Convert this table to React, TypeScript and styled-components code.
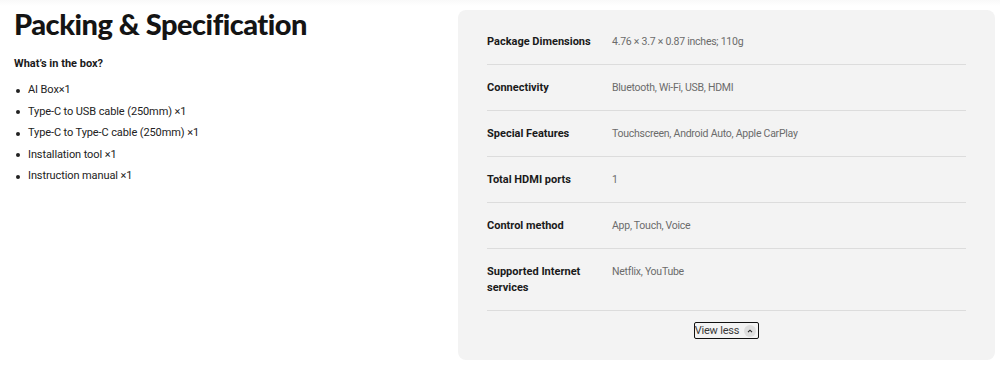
import * as React from 'react';
import styled, { createGlobalStyle } from 'styled-components';

const GlobalStyle = createGlobalStyle`
    html, body {
        margin: 0;
        padding: 0;
        background: linear-gradient(#f9f9f9, #ffffff 6px) no-repeat #ffffff;
        font-family: Roboto, "Liberation Sans", sans-serif;
        color: #1a1a1a;
    }
`;

const boxItems = [
    'AI Box×1',
    'Type-C to USB cable (250mm) ×1',
    'Type-C to Type-C cable (250mm) ×1',
    'Installation tool ×1',
    'Instruction manual ×1',
];

const specs: [string, string][] = [
    ['Package Dimensions', '4.76 × 3.7 × 0.87 inches; 110g'],
    ['Connectivity', 'Bluetooth, Wi-Fi, USB, HDMI'],
    ['Special Features', 'Touchscreen, Android Auto, Apple CarPlay'],
    ['Total HDMI ports', '1'],
    ['Control method', 'App, Touch, Voice'],
    ['Supported Internet services', 'Netflix, YouTube'],
];

function App() {
    return (
        <Page>
            <GlobalStyle />
            <Left>
                <Title>Packing &amp; Specification</Title>
                <SubTitle>What’s in the box?</SubTitle>
                <BoxList>
                    {boxItems.map(item => (
                        <BoxItem key={item}>{item}</BoxItem>
                    ))}
                </BoxList>
            </Left>
            <Panel>
                {specs.map(([label, value]) => (
                    <SpecRow key={label}>
                        <SpecLabel>{label}</SpecLabel>
                        <SpecValue>{value}</SpecValue>
                    </SpecRow>
                ))}
                <Footer>
                    <ToggleButton type="button">
                        View less
                        <Chevron>
                            <svg width="6" height="4" viewBox="0 0 6 4">
                                <path d="M1 3.2 L3 1.2 L5 3.2" fill="none" stroke="#222" strokeWidth="1.1" />
                            </svg>
                        </Chevron>
                    </ToggleButton>
                </Footer>
            </Panel>
        </Page>
    );
}

export default App;

const Page = styled.div`
    width: 1000px;
    height: 370px;
    box-sizing: border-box;
    display: flex;
    align-items: flex-start;
    padding: 10px 5px 0 14px;
`;

const Left = styled.div`
    flex: 1;
    display: flex;
    flex-direction: column;
`;

const Title = styled.h1`
    margin: -6px 0 0;
    font-family: Lato, "Open Sans", sans-serif;
    font-weight: 900;
    font-size: 29px;
    line-height: 40px;
    letter-spacing: -0.5px;
    color: #141414;
`;

const SubTitle = styled.div`
    margin-top: 12px;
    font-size: 11px;
    font-weight: 700;
    line-height: 16px;
    color: #1a1a1a;
`;

const BoxList = styled.ul`
    margin: 10px 0 0;
    padding: 0 0 0 14px;
    list-style: none;
    display: flex;
    flex-direction: column;
    gap: 5.6px;
`;

const BoxItem = styled.li`
    position: relative;
    font-size: 11px;
    line-height: 16px;
    letter-spacing: -0.1px;
    color: #222;

    &::before {
        content: '';
        position: absolute;
        left: -12px;
        top: 6.5px;
        width: 4px;
        height: 4px;
        border-radius: 50%;
        background: #222;
    }
`;

const Panel = styled.div`
    width: 537px;
    height: 350px;
    box-sizing: border-box;
    background: #f3f3f3;
    border-radius: 8px;
    padding: 9px 29px 0;
    display: flex;
    flex-direction: column;
`;

const SpecRow = styled.div`
    display: flex;
    padding: 15px 0 14px;
    border-bottom: 1px solid #dcdcdc;
    font-size: 11px;
    line-height: 16px;

    &:last-of-type {
        padding-top: 14px;
        padding-bottom: 14px;
    }
`;

const SpecLabel = styled.div`
    width: 125px;
    flex-shrink: 0;
    padding-right: 20px;
    box-sizing: border-box;
    font-weight: 700;
    color: #1a1a1a;
`;

const SpecValue = styled.div`
    font-size: 10.5px;
    letter-spacing: -0.25px;
    color: #6b6b6b;
`;

const Footer = styled.div`
    display: flex;
    justify-content: center;
    padding-top: 11px;
`;

const ToggleButton = styled.button`
    display: flex;
    align-items: center;
    gap: 5px;
    height: 17px;
    padding: 0 2px 0 0;
    border: 1.5px solid #111;
    border-radius: 2px;
    background: transparent;
    font-family: Roboto, "Liberation Sans", sans-serif;
    font-size: 11px;
    letter-spacing: -0.2px;
    color: #3a3a3a;
    cursor: pointer;
`;

const Chevron = styled.span`
    display: inline-flex;
    align-items: center;
    justify-content: center;
    width: 12px;
    height: 12px;
    border-radius: 50%;
    background: #dedede;
`;
